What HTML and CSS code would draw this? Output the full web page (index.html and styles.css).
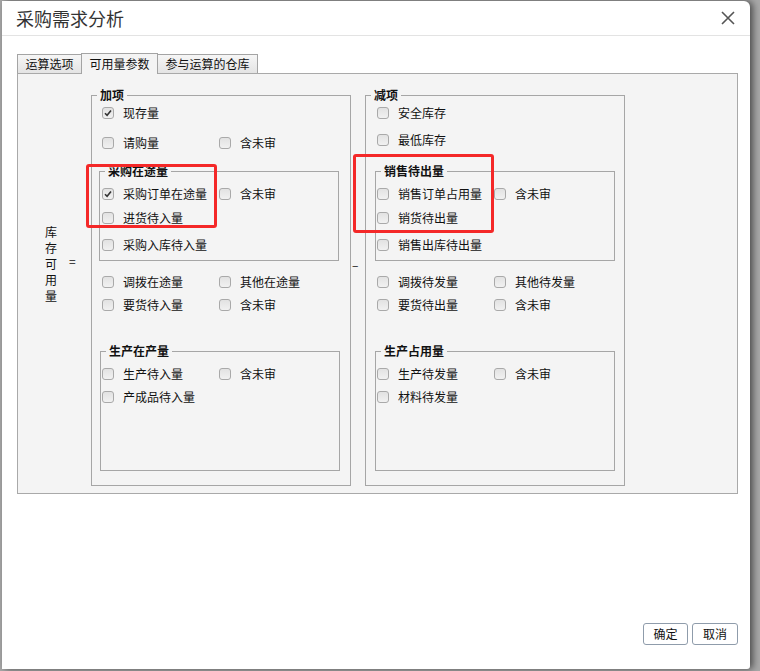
FILE: index.html
```html
<!DOCTYPE html>
<html lang="zh-CN">
<head>
<meta charset="utf-8">
<title>采购需求分析</title>
<link rel="stylesheet" href="styles.css">
</head>
<body>
<div class="dialog">
  <div class="titlebar">
    <span class="title">采购需求分析</span>
    <svg class="close" width="14" height="14" viewBox="0 0 14 14"><path d="M1 1 L13 13 M13 1 L1 13" stroke="#555" stroke-width="1.6" fill="none"/></svg>
  </div>

  <div class="tabs">
    <div class="tab t1">运算选项</div>
    <div class="tab t2 active">可用量参数</div>
    <div class="tab t3">参与运算的仓库</div>
  </div>

  <div class="panel">
    <div class="lhs">
      <div class="vlabel">库存可用量</div>
      <div class="eq">=</div>
    </div>

    <fieldset class="group g-left">
      <legend>加项</legend>
      <div class="row"><label class="cb"><span class="box on"><svg viewBox="0 0 10 10"><path d="M2 5.2 L4.1 7.3 L8 2.6" fill="none" stroke="#333" stroke-width="1.6"/></svg></span>现存量</label></div>
      <div class="row r-mt10"><label class="cb"><span class="box"></span>请购量</label><label class="cb"><span class="box"></span>含未审</label></div>

      <fieldset class="sub s-top">
        <legend>采购在途量</legend>
        <div class="row r-mt5"><label class="cb"><span class="box on"><svg viewBox="0 0 10 10"><path d="M2 5.2 L4.1 7.3 L8 2.6" fill="none" stroke="#333" stroke-width="1.6"/></svg></span>采购订单在途量</label><label class="cb"><span class="box"></span>含未审</label></div>
        <div class="row r-mt4"><label class="cb"><span class="box"></span>进货待入量</label></div>
        <div class="row r-mt7"><label class="cb"><span class="box"></span>采购入库待入量</label></div>
      </fieldset>

      <div class="row r-mt11"><label class="cb"><span class="box"></span>调拨在途量</label><label class="cb"><span class="box"></span>其他在途量</label></div>
      <div class="row r-mt3"><label class="cb"><span class="box"></span>要货待入量</label><label class="cb"><span class="box"></span>含未审</label></div>

      <fieldset class="sub s-bottom s-shift">
        <legend>生产在产量</legend>
        <div class="row r-mt5"><label class="cb"><span class="box"></span>生产待入量</label><label class="cb"><span class="box"></span>含未审</label></div>
        <div class="row r-mt3"><label class="cb"><span class="box"></span>产成品待入量</label></div>
      </fieldset>
    </fieldset>

    <div class="minus">–</div>

    <fieldset class="group g-right">
      <legend>减项</legend>
      <div class="row"><label class="cb"><span class="box"></span>安全库存</label></div>
      <div class="row r-mt7"><label class="cb"><span class="box"></span>最低库存</label></div>

      <fieldset class="sub s-top s-right-first">
        <legend>销售待出量</legend>
        <div class="row r-mt5"><label class="cb"><span class="box"></span>销售订单占用量</label><label class="cb"><span class="box"></span>含未审</label></div>
        <div class="row r-mt4"><label class="cb"><span class="box"></span>销货待出量</label></div>
        <div class="row r-mt7"><label class="cb"><span class="box"></span>销售出库待出量</label></div>
      </fieldset>

      <div class="row r-mt11"><label class="cb"><span class="box"></span>调拨待发量</label><label class="cb"><span class="box"></span>其他待发量</label></div>
      <div class="row r-mt3"><label class="cb"><span class="box"></span>要货待出量</label><label class="cb"><span class="box"></span>含未审</label></div>

      <fieldset class="sub s-bottom">
        <legend>生产占用量</legend>
        <div class="row r-mt5"><label class="cb"><span class="box"></span>生产待发量</label><label class="cb"><span class="box"></span>含未审</label></div>
        <div class="row r-mt3"><label class="cb"><span class="box"></span>材料待发量</label></div>
      </fieldset>
    </fieldset>

    <div class="mark mark-left"></div>
    <div class="mark mark-right"></div>
  </div>

  <div class="footer">
    <button class="btn btn-ok">确定</button>
    <button class="btn btn-cancel">取消</button>
  </div>
</div>
</body>
</html>
```

FILE: styles.css
```css
html, body {
  margin: 0;
}
body {
  width: 760px;
  height: 671px;
  overflow: hidden;
  box-sizing: border-box;
  padding: 1px 0 0 2px;
  background: #a8a8a8;
  font-family: "Noto Sans CJK SC", "Noto Sans", sans-serif;
  font-size: 12px;
  color: #111;
}

.dialog {
  width: 748px;
  height: 668px;
  background: #fff;
  border-radius: 0 6px 3px 0;
  box-shadow: 3px 0 7px rgba(0, 0, 0, 0.55);
  display: flex;
  flex-direction: column;
}

/* title bar */
.titlebar {
  height: 34px;
  border-bottom: 1px solid #e3e3e3;
  display: flex;
  align-items: center;
  justify-content: space-between;
  padding: 0 15px 0 14px;
}
.title {
  font-size: 18px;
  color: #333;
  line-height: 24px;
  letter-spacing: 0;
}
.close {
  display: block;
  margin-top: -1px;
}

/* tabs */
.tabs {
  display: flex;
  align-items: flex-end;
  margin: 17px 0 0 15px;
  height: 20px;
  position: relative;
  z-index: 2;
}
.tab {
  box-sizing: border-box;
  height: 19px;
  border: 1px solid #a4a4a4;
  border-bottom: none;
  background: linear-gradient(#f6f6f6, #e4e4e4);
  text-align: center;
  line-height: 17px;
  font-size: 12px;
  color: #111;
}
.t1 { width: 65px; }
.t2 { width: 77px; margin-left: -1px; }
.t3 { width: 101px; margin-left: -1px; }
.tab.active {
  height: 21px;
  margin-bottom: -1px;
  background: #f4f4f4;
  line-height: 19px;
  position: relative;
  z-index: 3;
}

/* panel */
.panel {
  position: relative;
  box-sizing: border-box;
  width: 721px;
  height: 421px;
  margin-left: 15px;
  border: 1px solid #a9a9a9;
  background: #f4f4f4;
  display: flex;
  align-items: flex-start;
  padding-top: 13px;
}

.lhs {
  width: 73px;
  flex: none;
  display: flex;
  box-sizing: border-box;
  padding-left: 27px;
  margin-top: 137px;
}
.vlabel {
  width: 12px;
  line-height: 16px;
  word-break: break-all;
  color: #111;
}
.eq {
  margin-left: 12px;
  margin-top: 29px;
  line-height: 16px;
}

.minus {
  width: 14px;
  flex: none;
  margin-top: 170px;
  line-height: 16px;
  padding-left: 1px;
  box-sizing: border-box;
  color: #111;
}

/* group boxes */
fieldset {
  margin: 0;
  padding: 0;
  min-width: 0;
  border: 1px solid #a6a6a6;
  box-sizing: border-box;
}
legend {
  font-weight: bold;
  font-size: 12px;
  line-height: 16px;
  padding: 0 3px;
  margin-left: 5px;
  color: #111;
}
.group {
  width: 260px;
  flex: none;
  padding-bottom: 14px;
}
.sub {
  width: 240px;
}
.g-left .sub { margin-left: 7px; }
.g-left .sub.s-shift { margin-left: 8px; }
.g-right .sub { margin-left: 9px; }

.s-top {
  margin-top: 10px;
  padding-bottom: 5px;
}
.g-right .s-top { margin-top: 13px; }
.s-bottom {
  margin-top: 28px;
  padding-bottom: 63px;
}

/* rows */
.row {
  display: flex;
  height: 20px;
  align-items: center;
}
.g-left .row { padding-left: 10px; }
.g-left .sub .row { padding-left: 2px; }
.g-left .sub.s-shift .row { padding-left: 1px; }
.g-right .row { padding-left: 11px; }
.g-right .sub .row { padding-left: 1px; }

.r-mt3 { margin-top: 3px; }
.r-mt4 { margin-top: 4px; }
.r-mt5 { margin-top: 5px; }
.r-mt7 { margin-top: 7px; }
.r-mt10 { margin-top: 10px; }
.r-mt11 { margin-top: 11px; }

.cb {
  width: 117px;
  flex: none;
  display: flex;
  align-items: center;
  line-height: 20px;
  white-space: nowrap;
  color: #111;
}
.box {
  width: 12px;
  height: 12px;
  box-sizing: border-box;
  border: 1px solid #a9a9a9;
  border-radius: 3px;
  background: linear-gradient(#e2e2e2, #f1f1f1);
  margin-right: 9px;
  flex: none;
  display: flex;
  align-items: center;
  justify-content: center;
}
.box svg {
  width: 10px;
  height: 10px;
  display: block;
}

/* red annotation frames */
.mark {
  position: absolute;
  box-sizing: border-box;
  border: 3px solid #f42828;
  border-radius: 3px;
}
.mark-left {
  left: 68px;
  top: 90px;
  width: 131px;
  height: 64px;
}
.mark-right {
  left: 335px;
  top: 80px;
  width: 141px;
  height: 79px;
}

/* footer */
.footer {
  display: flex;
  justify-content: flex-end;
  gap: 4px;
  margin-top: 129px;
  padding-right: 12px;
}
.btn {
  height: 22px;
  box-sizing: border-box;
  border: 1px solid #8f9cab;
  border-radius: 3px;
  background: #fff;
  font-family: "Noto Sans CJK SC", sans-serif;
  font-size: 12px;
  color: #111;
  padding: 0;
  line-height: 20px;
}
.btn-ok { width: 45px; }
.btn-cancel { width: 46px; }
```
